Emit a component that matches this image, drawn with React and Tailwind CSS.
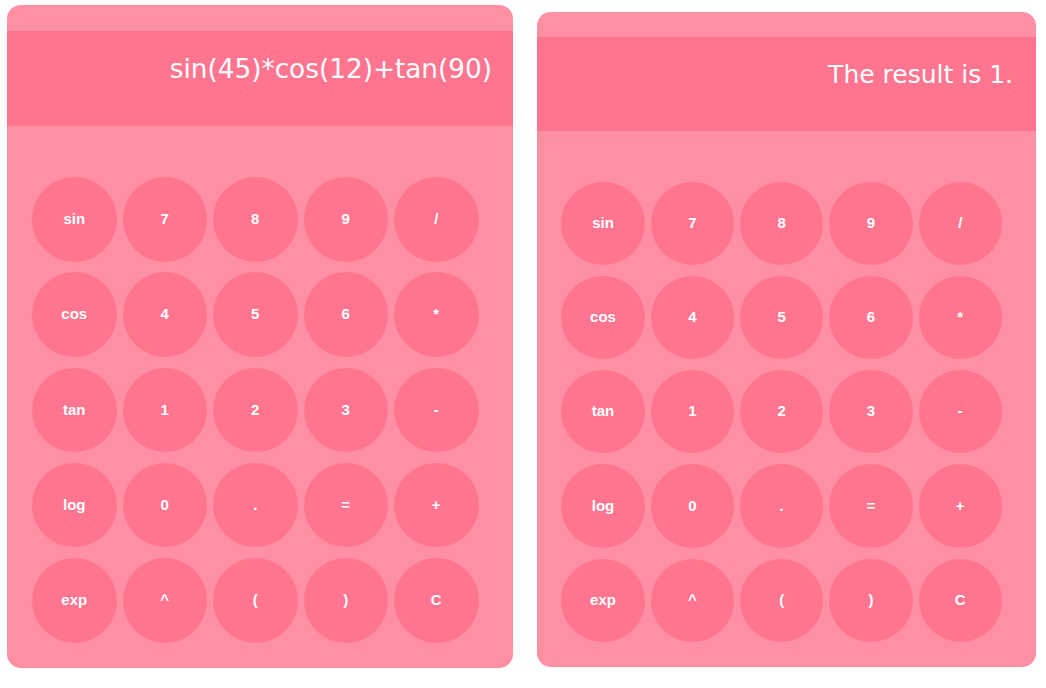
const KEYS = [
  "sin", "7", "8", "9", "/",
  "cos", "4", "5", "6", "*",
  "tan", "1", "2", "3", "-",
  "log", "0", ".", "=", "+",
  "exp", "^", "(", ")", "C",
];

function Calculator({ display, big }) {
  // the right one is drawn a touch smaller than the left one
  const s = big
    ? {
        box: "w-[506px] h-[663px] mt-[5px]",
        top: "h-[26px]",
        screen: "h-[95px] pr-[21px] pt-[25px] text-[26.3px]",
        grid: "pl-[25px] pt-[51px] grid-cols-[repeat(5,84.5px)] gap-x-[6px] gap-y-[10.8px]",
        key: "w-[84.5px] h-[84.5px]",
      }
    : {
        box: "w-[499px] h-[655px] mt-[12px]",
        top: "h-[25px]",
        screen: "h-[94px] pr-[23px] pt-[25px] text-[25px]",
        grid: "pl-[24.4px] pt-[50.5px] grid-cols-[repeat(5,83.3px)] gap-x-[6px] gap-y-[11px]",
        key: "w-[83.3px] h-[83.3px]",
      };

  return (
    <div className={`${s.box} bg-[#ff8fa3] rounded-[14px] overflow-hidden flex flex-col`}>
      <div className={s.top}></div>
      <div className={`${s.screen} bg-[#ff758f] text-white text-right leading-none font-['DejaVu_Sans',sans-serif] whitespace-nowrap`}>
        {display}
      </div>
      <div className={`grid ${s.grid}`}>
        {KEYS.map((k) => (
          <button
            key={k}
            className={`${s.key} rounded-full bg-[#ff758f] text-white font-bold text-[15px] font-['Liberation_Sans',Arial,sans-serif] flex items-center justify-center`}
          >
            {k}
          </button>
        ))}
      </div>
    </div>
  );
}

export default function App() {
  return (
    <div className="w-[1046px] h-[688px] bg-white flex items-start pl-[7px] gap-[24px]">
      <Calculator display="sin(45)*cos(12)+tan(90)" big />
      <Calculator display="The result is 1." />
    </div>
  );
}
